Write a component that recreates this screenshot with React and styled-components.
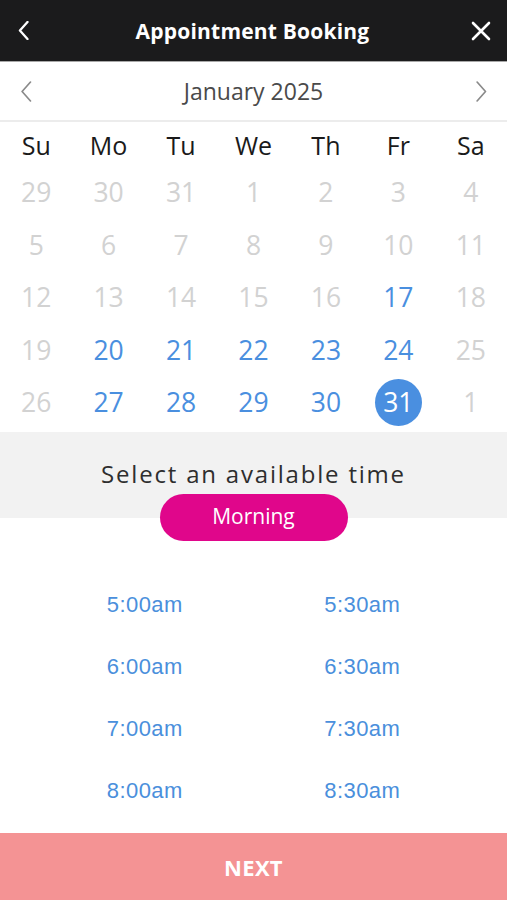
import React from 'react';
import styled, { createGlobalStyle } from 'styled-components';

const GlobalStyle = createGlobalStyle`
  html, body {
    margin: 0;
    padding: 0;
    background: #fff;
  }
  body {
    font-family: "Open Sans", "Liberation Sans", sans-serif;
  }
  * { box-sizing: border-box; }
`;

const Screen = styled.div`
  display: flex;
  flex-direction: column;
  width: 100%;
  height: 100vh;
  overflow: hidden;
`;

const TopBar = styled.header`
  display: flex;
  align-items: center;
  justify-content: space-between;
  height: 62px;
  padding: 0 14px 0 12px;
  background: #1b1b1c;
  border-bottom: 1px solid #a8a8a8;
  color: #fff;
`;

const TopTitle = styled.h1`
  margin: 0;
  font-size: 21px;
  font-weight: 700;
  letter-spacing: 0.2px;
`;

const IconButton = styled.span`
  display: flex;
  align-items: center;
  justify-content: center;
  width: 24px;
  height: 24px;
`;

const MonthBar = styled.div`
  display: flex;
  align-items: center;
  justify-content: space-between;
  height: 60px;
  padding: 0 14px 0 14px;
  border-bottom: 2px solid #ececec;
`;

const MonthLabel = styled.span`
  font-size: 23px;
  color: #4a4a4a;
`;

const Calendar = styled.div`
  display: grid;
  grid-template-columns: repeat(7, 1fr);
  grid-template-rows: 44px repeat(5, 52.5px);
  padding-bottom: 3px;
`;

const WeekDay = styled.div`
  display: flex;
  align-items: center;
  justify-content: center;
  padding-top: 2px;
  font-size: 25px;
  color: #1a1a1a;
`;

const DayCell = styled.div`
  display: flex;
  align-items: center;
  justify-content: center;
`;

const DayNumber = styled.span`
  display: flex;
  align-items: center;
  justify-content: center;
  width: 47px;
  height: 47px;
  border-radius: 50%;
  font-size: 26.5px;
  color: ${p => (p.$selected ? '#fff' : p.$available ? '#4a8fdf' : '#d2d2d2')};
  background: ${p => (p.$selected ? '#4a8fe0' : 'transparent')};
`;

const TimeHeader = styled.section`
  display: flex;
  flex-direction: column;
  align-items: center;
  padding-top: 27px;
  background: linear-gradient(#f2f2f2 0, #f2f2f2 86px, #fff 86px);
`;

const TimeTitle = styled.h2`
  margin: 0;
  font-size: 24px;
  font-weight: 400;
  line-height: 30px;
  letter-spacing: 1.8px;
  color: #2e2e2e;
`;

const PeriodPill = styled.button`
  margin-top: 5px;
  width: 188px;
  height: 47px;
  border: none;
  border-radius: 24px;
  background: #e0068b;
  color: #fff;
  font-family: "Open Sans", sans-serif;
  font-size: 21px;
  padding: 0 0 2px;
`;

const SlotGrid = styled.div`
  flex: 1;
  display: grid;
  grid-template-columns: 1fr 1fr;
  grid-auto-rows: 62px;
  align-content: start;
  padding: 33px 36px 0;
`;

const Slot = styled.div`
  display: flex;
  align-items: center;
  justify-content: center;
  font-family: "Liberation Sans", Arial, sans-serif;
  font-size: 22px;
  letter-spacing: 0.4px;
  color: #4a8fdc;
`;

const NextButton = styled.button`
  flex: 0 0 67px;
  width: 100%;
  border: none;
  background: #f49394;
  color: #fff;
  font-family: "Open Sans", sans-serif;
  font-size: 22px;
  font-weight: 700;
  letter-spacing: 0.3px;
`;

const Chevron = ({ dir = 'left', color, size = 20, width = 2 }) => (
  <svg width={size * 0.6} height={size} viewBox="0 0 12 20" fill="none">
    <polyline
      points={dir === 'left' ? '10,1 2,10 10,19' : '2,1 10,10 2,19'}
      stroke={color}
      strokeWidth={width}
      strokeLinecap="round"
      strokeLinejoin="round"
    />
  </svg>
);

const CloseIcon = () => (
  <svg width="20" height="20" viewBox="0 0 20 20" fill="none">
    <path d="M2 2 L18 18 M18 2 L2 18" stroke="#fff" strokeWidth="2.6" strokeLinecap="round" />
  </svg>
);

const weekDays = ['Su', 'Mo', 'Tu', 'We', 'Th', 'Fr', 'Sa'];

const days = [
  [29, 30, 31, 1, 2, 3, 4],
  [5, 6, 7, 8, 9, 10, 11],
  [12, 13, 14, 15, 16, 17, 18],
  [19, 20, 21, 22, 23, 24, 25],
  [26, 27, 28, 29, 30, 31, 1],
];

const isAvailable = (row, col) => {
  if (row === 2 && col === 5) return true;
  if ((row === 3 || row === 4) && col >= 1 && col <= 5) return true;
  return false;
};

const slots = ['5:00am', '5:30am', '6:00am', '6:30am', '7:00am', '7:30am', '8:00am', '8:30am'];

export default function App() {
  return (
    <Screen>
      <GlobalStyle />
      <TopBar>
        <IconButton><Chevron dir="left" color="#fff" size={19} width={2.4} /></IconButton>
        <TopTitle>Appointment Booking</TopTitle>
        <IconButton><CloseIcon /></IconButton>
      </TopBar>
      <MonthBar>
        <IconButton><Chevron dir="left" color="#8a8a8a" size={21} width={1.6} /></IconButton>
        <MonthLabel>January 2025</MonthLabel>
        <IconButton><Chevron dir="right" color="#8a8a8a" size={21} width={1.6} /></IconButton>
      </MonthBar>
      <Calendar>
        {weekDays.map(d => (
          <WeekDay key={d}>{d}</WeekDay>
        ))}
        {days.map((row, r) =>
          row.map((n, c) => (
            <DayCell key={`${r}-${c}`}>
              <DayNumber $available={isAvailable(r, c)} $selected={r === 4 && c === 5}>
                {n}
              </DayNumber>
            </DayCell>
          ))
        )}
      </Calendar>
      <TimeHeader>
        <TimeTitle>Select an available time</TimeTitle>
        <PeriodPill>Morning</PeriodPill>
      </TimeHeader>
      <SlotGrid>
        {slots.map(s => (
          <Slot key={s}>{s}</Slot>
        ))}
      </SlotGrid>
      <NextButton>NEXT</NextButton>
    </Screen>
  );
}
